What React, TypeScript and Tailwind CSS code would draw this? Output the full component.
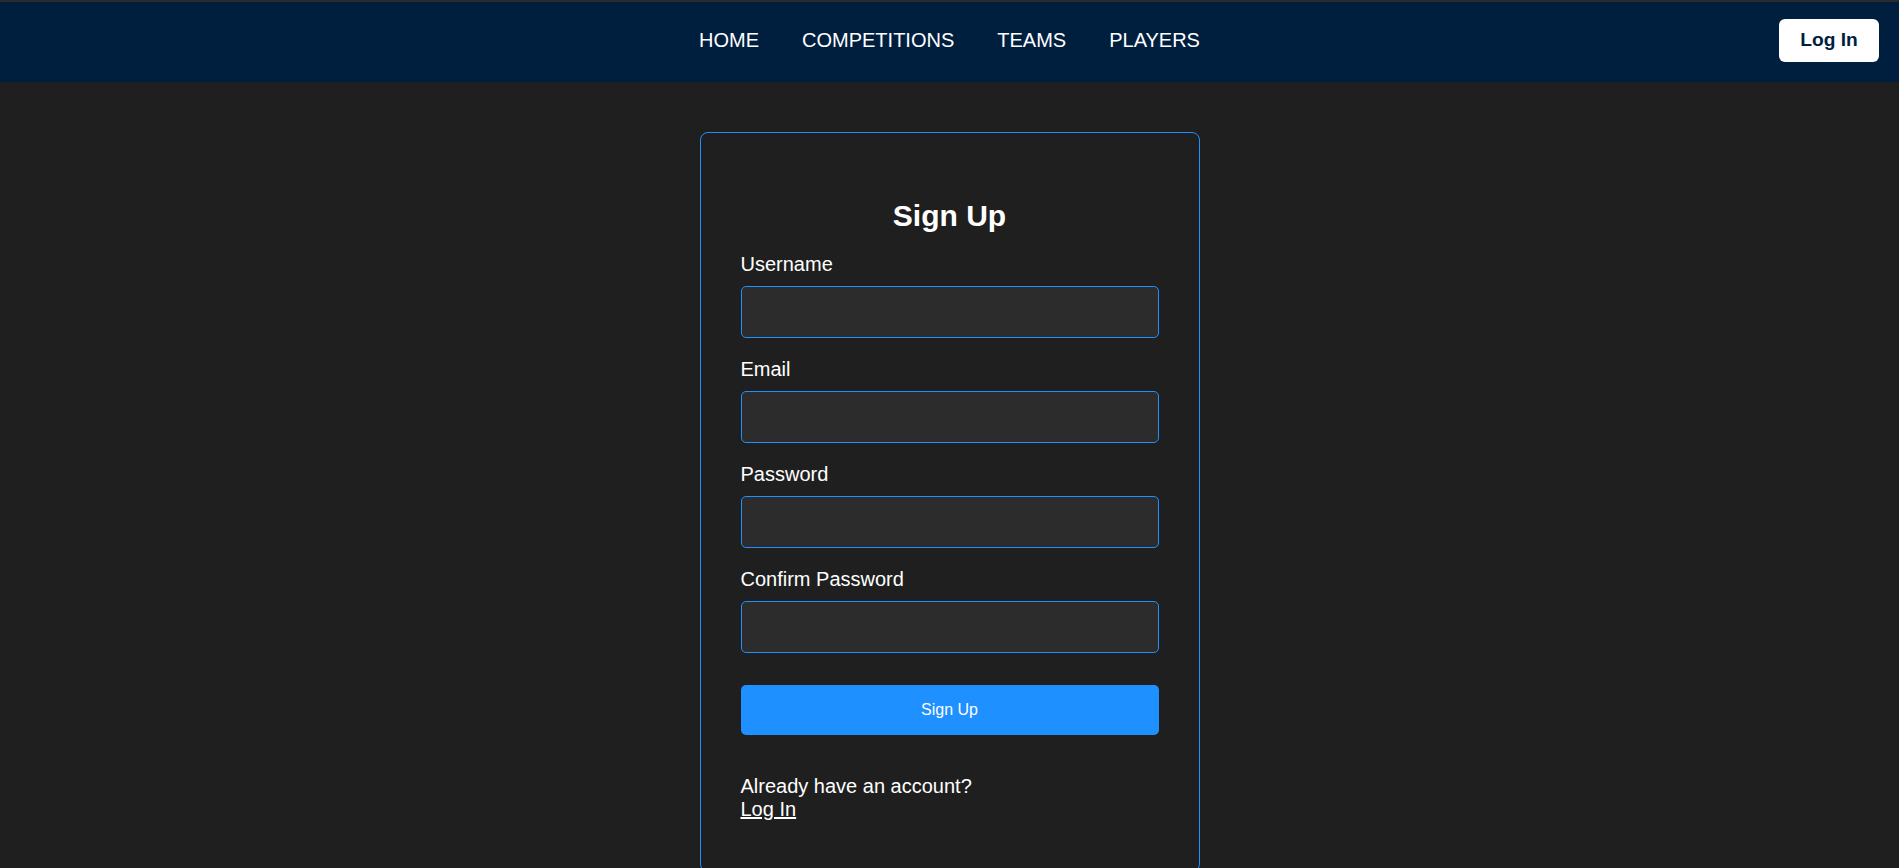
import { useState } from 'react';

const NAV_LINKS = ['HOME', 'COMPETITIONS', 'TEAMS', 'PLAYERS'];

function Field({
  label,
  type,
  value,
  onChange,
}: {
  label: string;
  type: string;
  value: string;
  onChange: (v: string) => void;
}) {
  return (
    <label className="flex flex-col">
      <span className="text-[20px] leading-[23px] text-white">{label}</span>
      <input
        type={type}
        value={value}
        onChange={(e) => onChange(e.target.value)}
        className="mt-[10px] h-[52px] w-full rounded-[5px] border border-[#1e90ff] bg-[#2c2c2c] px-3 text-[16px] text-white outline-none"
      />
    </label>
  );
}

export default function App() {
  const [username, setUsername] = useState('');
  const [email, setEmail] = useState('');
  const [password, setPassword] = useState('');
  const [confirm, setConfirm] = useState('');

  return (
    <div className="min-h-screen bg-[#1f1f1f] font-['Liberation_Sans',Arial,sans-serif] text-white">
      <header className="border-t-2 border-[#2b2b2b] bg-[#001f3f]">
        <div className="grid h-[80px] grid-cols-[1fr_auto_1fr] items-center px-5 pb-1">
          <div />
          <nav className="flex items-center gap-[43px]">
            {NAV_LINKS.map((link) => (
              <a key={link} href="#" className="text-[20px] leading-[23px] text-white">
                {link}
              </a>
            ))}
          </nav>
          <div className="flex justify-end">
            <button
              type="button"
              className="h-[43px] w-[100px] rounded-md bg-white text-[19.2px] font-bold text-[#001f3f]"
            >
              Log In
            </button>
          </div>
        </div>
      </header>

      <main className="flex justify-center pt-[50px]">
        <div className="w-[500px] rounded-lg border border-[#1e90ff] bg-[#1f1f1f] px-10 pt-10 pb-[50px]">
          <h2 className="mt-[26px] mb-[20px] text-center text-[30px] leading-[34px] font-bold">Sign Up</h2>
          <form className="flex flex-col gap-5" onSubmit={(e) => e.preventDefault()}>
            <Field label="Username" type="text" value={username} onChange={setUsername} />
            <Field label="Email" type="email" value={email} onChange={setEmail} />
            <Field label="Password" type="password" value={password} onChange={setPassword} />
            <Field label="Confirm Password" type="password" value={confirm} onChange={setConfirm} />
            <button
              type="submit"
              className="mt-3 h-[50px] w-full rounded-[5px] bg-[#1e90ff] text-[16px] text-white"
            >
              Sign Up
            </button>
          </form>
          <p className="mt-10 text-[20px] leading-[23px]">
            Already have an account?
            <br />
            <a href="#" className="text-white underline">
              Log In
            </a>
          </p>
        </div>
      </main>
    </div>
  );
}
